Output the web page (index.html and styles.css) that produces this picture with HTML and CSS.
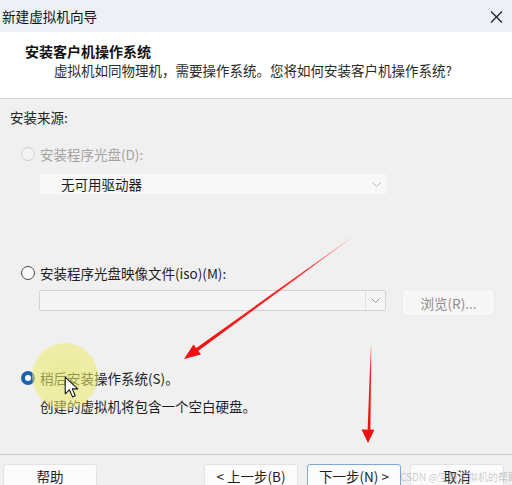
FILE: index.html
```html
<!DOCTYPE html>
<html lang="zh-CN">
<head>
<meta charset="utf-8">
<title>新建虚拟机向导</title>
<link rel="stylesheet" href="styles.css">
</head>
<body>
<div class="window">
  <div class="titlebar">
    <span class="title">新建虚拟机向导</span>
    <svg class="close" width="13" height="12" viewBox="0 0 13 12"><path d="M1 0.5 L12 11.5 M12 0.5 L1 11.5" stroke="#222" stroke-width="1.3" fill="none"/></svg>
  </div>
  <div class="header">
    <div class="h-title">安装客户机操作系统</div>
    <div class="h-sub">虚拟机如同物理机，需要操作系统。您将如何安装客户机操作系统?</div>
  </div>
  <div class="content">
    <div class="label">安装来源:</div>
    <div class="option opt1 is-disabled"><span class="radio"></span><span>安装程序光盘(D):</span></div>
    <div class="select">
      <span>无可用驱动器</span>
      <svg class="chev" width="9" height="5" viewBox="0 0 9 5"><path d="M0.5 0.5 L4.5 4.5 L8.5 0.5" stroke="#b5b5b5" fill="none"/></svg>
    </div>
    <div class="option opt2"><span class="radio"></span><span>安装程序光盘映像文件(iso)(M):</span></div>
    <div class="iso-row">
      <div class="combo">
        <span class="combo-field"></span>
        <span class="combo-btn"><svg width="9" height="5" viewBox="0 0 9 5"><path d="M0.5 0.5 L4.5 4.5 L8.5 0.5" stroke="#9a9a9a" fill="none"/></svg></span>
      </div>
      <div class="btn browse">浏览(R)...</div>
    </div>
    <div class="option opt3"><span class="radio checked"></span><span>稍后安装操作系统(S)。</span></div>
    <div class="desc">创建的虚拟机将包含一个空白硬盘。</div>
  </div>
  <div class="footer">
    <div class="btn">帮助</div>
    <div class="btn-group">
      <div class="btn">&lt; 上一步(B)</div>
      <div class="btn focused">下一步(N) &gt;</div>
      <div class="btn">取消</div>
    </div>
  </div>

  <div class="highlight"></div>
  <svg class="cursor" width="15" height="23" viewBox="0 0 14 22"><path d="M1 1 L1 17 L5 13.2 L8 20 L10.6 18.9 L7.7 12.3 L13 12.3 Z" fill="#fff" stroke="#111" stroke-width="1" stroke-linejoin="round"/></svg>
  <svg class="arrows" width="512" height="485" viewBox="0 0 512 485">
    <defs>
      <linearGradient id="g1" x1="351" y1="238" x2="197" y2="350" gradientUnits="userSpaceOnUse">
        <stop offset="0" stop-color="#ff3030" stop-opacity="0.15"/>
        <stop offset="0.3" stop-color="#ff1a1a" stop-opacity="0.9"/>
        <stop offset="1" stop-color="#f01010"/>
      </linearGradient>
      <linearGradient id="g2" x1="371" y1="347" x2="369" y2="430" gradientUnits="userSpaceOnUse">
        <stop offset="0" stop-color="#ff3030" stop-opacity="0.5"/>
        <stop offset="0.3" stop-color="#ff1a1a"/>
        <stop offset="1" stop-color="#f01010"/>
      </linearGradient>
    </defs>
    <polygon points="351.2,238.2 350.8,237.8 196,348.2 198,351" fill="url(#g1)"/>
    <polygon points="184,359 193.5,344.5 201,354.5" fill="#f01010"/>
    <polygon points="371.3,347 370.7,347 367.6,431 370.4,431" fill="url(#g2)"/>
    <polygon points="368,443 361.5,429.5 374.5,429.8" fill="#f01010"/>
  </svg>
  <div class="watermark">CSDN @宝藏虚拟机的帮助</div>
</div>
</body>
</html>
```

FILE: styles.css
```css
* { box-sizing: border-box; }

html, body {
  margin: 0;
  padding: 0;
}

body {
  width: 512px;
  height: 485px;
  overflow: hidden;
  background: #f0f0f0;
  font-family: "Noto Sans CJK SC", "Noto Sans", sans-serif;
  color: #1c1c1c;
}

.window {
  position: relative;
  width: 512px;
  height: 485px;
  overflow: hidden;
  background: #f0f0f0;
}

.titlebar {
  height: 32px;
  display: flex;
  align-items: center;
  justify-content: space-between;
  padding: 0 9px 0 2px;
  background: #edf1f7;
}

.title {
  font-size: 13.6px;
  line-height: 20px;
  color: #111;
}

.close { display: block; margin-top: 1px; }

.header {
  height: 67px;
  background: #ffffff;
  border-bottom: 1px solid #d2d2d2;
  padding: 10px 0 0 25px;
}

.h-title {
  font-size: 14px;
  line-height: 19px;
  font-weight: bold;
  color: #111;
}

.h-sub {
  font-size: 13.5px;
  line-height: 19px;
  margin-left: 29px;
  color: #2a2a2a;
}

.content {
  height: 355px;
  padding: 8px 0 0 10px;
  font-size: 13.5px;
}

.label {
  line-height: 20px;
  color: #222;
}

.option {
  display: flex;
  align-items: center;
  gap: 5px;
  margin-left: 11px;
  line-height: 20px;
  height: 20px;
  color: #1e1e1e;
}

.opt1 { margin-top: 17px; }
.opt2 { margin-top: 69px; }
.opt3 { margin-top: 52px; }

.is-disabled { color: #a3a3a3; }

.radio {
  width: 14px;
  height: 14px;
  border-radius: 50%;
  border: 1px solid #4a4a4a;
  background: #fbfbfb;
  flex: none;
}

.is-disabled .radio {
  border-color: #cdcdcd;
  background: #f3f3f3;
}

.radio.checked {
  border: 4px solid #1f5fb0;
  background: #ffffff;
}

.select {
  margin: 10px 0 0 30px;
  width: 346px;
  height: 20px;
  background: #f8f8f8;
  display: flex;
  align-items: center;
  justify-content: space-between;
  padding: 0 5px 0 21px;
  color: #1e1e1e;
  line-height: 20px;
}

.chev { display: block; }

.iso-row {
  display: flex;
  align-items: flex-start;
  margin: 7px 0 0 29px;
}

.combo {
  width: 347px;
  height: 21px;
  border: 1px solid #d3d3d3;
  border-radius: 2px;
  background: #f5f5f5;
  display: flex;
}

.combo-field { flex: 1; }

.combo-btn {
  width: 20px;
  border-left: 1px solid #e1e1e1;
  display: flex;
  align-items: center;
  justify-content: center;
}

.combo-btn svg { display: block; }

.btn {
  width: 94px;
  height: 24px;
  background: #fcfcfc;
  border: 1px solid #e3e3e3;
  border-radius: 3px;
  display: flex;
  align-items: center;
  justify-content: center;
  font-size: 13.5px;
  line-height: 20px;
  color: #1e1e1e;
}

.browse {
  width: 93px;
  height: 27px;
  margin: -1px 0 0 16px;
  background: #f7f7f7;
  border-color: #ebebeb;
  color: #8c8c8c;
  padding-top: 1px;
}

.desc {
  margin: 8px 0 0 30px;
  line-height: 20px;
  color: #1e1e1e;
}

.footer {
  border-top: 1px solid #cbcbcb;
  padding: 9px 8px 0 3px;
  display: flex;
  justify-content: space-between;
  align-items: flex-start;
}

.btn-group {
  display: flex;
  gap: 9px;
}

.btn.focused {
  border-color: #7ea8d2;
}

.highlight {
  position: absolute;
  left: 32px;
  top: 343px;
  width: 66px;
  height: 66px;
  border-radius: 50%;
  background: radial-gradient(circle, rgba(232, 232, 100, 0.6) 0%, rgba(236, 236, 110, 0.55) 70%, rgba(240, 240, 140, 0.4) 100%);
  pointer-events: none;
}

.cursor {
  position: absolute;
  left: 64px;
  top: 376px;
  pointer-events: none;
}

.arrows {
  position: absolute;
  left: 0;
  top: 0;
  pointer-events: none;
}

.watermark {
  position: absolute;
  left: 400px;
  top: 470px;
  font-size: 10px;
  line-height: 13px;
  white-space: nowrap;
  color: rgba(140, 140, 140, 0.45);
  pointer-events: none;
}
```
